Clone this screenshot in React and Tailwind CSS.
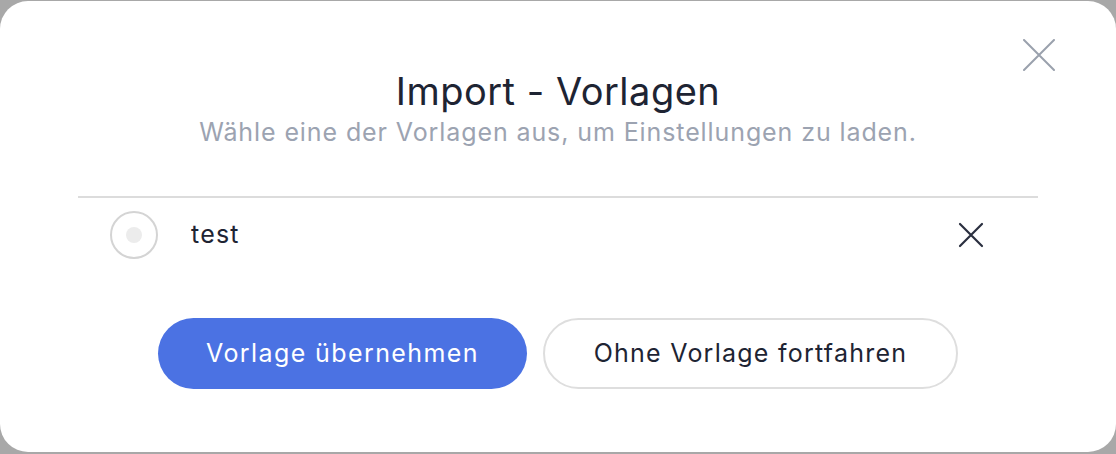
import React from "react";

export default function App() {
  return (
    <div className="h-[454px] w-[1116px] bg-[#a8a8a8] pt-[1px]" style={{ fontFamily: "Inter, 'Noto Sans', sans-serif" }}>
      <div className="relative h-[451px] rounded-[28px] bg-white">
        <button className="absolute right-[61px] top-[38px] h-[32px] w-[32px] flex items-center justify-center text-[#9aa1ad]">
          <svg width="32" height="32" viewBox="0 0 32 32" fill="none" stroke="currentColor" strokeWidth="2" strokeLinecap="round">
            <path d="M1 1 L31 31 M31 1 L1 31" />
          </svg>
        </button>
        <div className="flex flex-col items-center pt-[65px]">
          <h1 className="text-[38px] leading-[50px] text-[#1e2433] tracking-[0.5px]">Import - Vorlagen</h1>
          <p className="mt-[1px] text-[25px] leading-[30px] tracking-[0.9px] text-[#9ca3b1]">Wähle eine der Vorlagen aus, um Einstellungen zu laden.</p>
        </div>
        <div className="mx-[78px] mt-[49px] border-t-2 border-[#dcdcdc]">
          <div className="flex h-[74px] items-center pl-[32px] pr-[54px]">
            <div className="flex h-[48px] w-[48px] items-center justify-center rounded-full border-2 border-[#d4d4d4]">
              <div className="h-[16px] w-[16px] rounded-full bg-[#ececec]" />
            </div>
            <span className="ml-[33px] text-[25px] tracking-[1.2px] text-[#1e2433]">test</span>
            <button className="ml-auto flex h-[26px] w-[26px] items-center justify-center text-[#2a2f3f]">
              <svg width="26" height="26" viewBox="0 0 26 26" fill="none" stroke="currentColor" strokeWidth="2.2" strokeLinecap="round">
                <path d="M2 2 L24 24 M24 2 L2 24" />
              </svg>
            </button>
          </div>
        </div>
        <div className="mt-[46px] flex justify-center gap-[16px]">
          <button className="h-[71px] w-[369px] rounded-full bg-[#4b72e3] text-[25px] tracking-[1.4px] text-white">Vorlage übernehmen</button>
          <button className="h-[71px] w-[415px] rounded-full border-2 border-[#dedede] bg-white text-[25px] tracking-[1.25px] text-[#1e2433]">Ohne Vorlage fortfahren</button>
        </div>
      </div>
    </div>
  );
}
